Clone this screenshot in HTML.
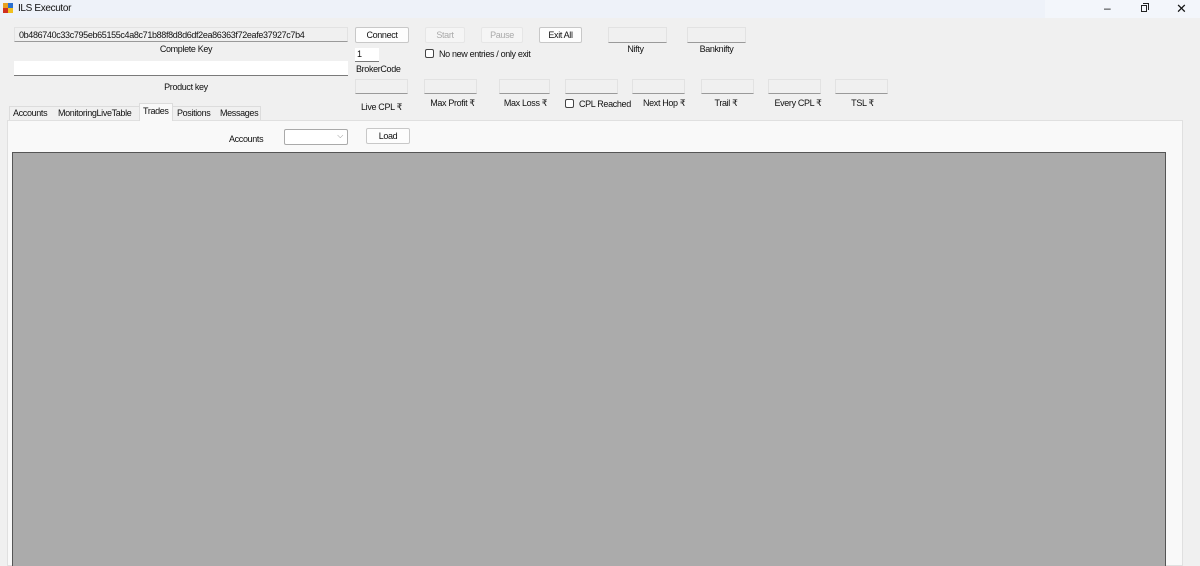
<!DOCTYPE html>
<html><head><style>
*{margin:0;padding:0;box-sizing:border-box}
body{width:1200px;height:566px;overflow:hidden;background:#f0f0f0;font-family:"Liberation Sans",sans-serif;font-size:9px;letter-spacing:-0.35px;color:#111;position:relative}
.a{position:absolute}
.tb{background:#fff;border-bottom:1px solid #7a7a7a}
.box{background:#f0f0f0;border-bottom:1px solid #9a9a9a;border-top:1px solid #e2e2e2;border-left:1px solid #e2e2e2;border-right:1px solid #e2e2e2}
.btn{background:#fdfdfd;border:1px solid #c8c8c8;border-radius:2px;text-align:center;line-height:14px}
.dis{color:#aaa;background:#f5f5f5;border-color:#e6e6e6}
.lbl{text-align:center}
.cb{width:9px;height:9px;border:1px solid #444;border-radius:2px;background:#fff}
</style></head><body>
<div class="a" style="left:0;top:0;width:1200px;height:18px;background:#eef2f9"></div>
<div class="a" style="left:1045px;top:0;width:155px;height:18px;background:#f3f6fb"></div>
<div class="a" style="left:3px;top:3px;width:5px;height:5px;background:#e8a020"></div>
<div class="a" style="left:8px;top:3px;width:5px;height:5px;background:#2a6fd0"></div>
<div class="a" style="left:3px;top:8px;width:5px;height:5px;background:#d03020"></div>
<div class="a" style="left:8px;top:8px;width:5px;height:5px;background:#f0c020"></div>
<div class="a" style="left:18px;top:3px;font-size:10px">ILS Executor</div>
<div class="a" style="left:1104px;top:1px;font-size:12px">–</div>
<div class="a" style="left:1141px;top:5px;width:6px;height:7px;border:1px solid #222"></div>
<div class="a" style="left:1143px;top:3px;width:6px;height:7px;border-top:1px solid #222;border-right:1px solid #222"></div>
<div class="a" style="left:1176px;top:1px;font-size:13px">✕</div>

<div class="a box" style="left:14px;top:27px;width:334px;height:15px;padding:2px 4px">0b486740c33c795eb65155c4a8c71b88f8d8d6df2ea86363f72eafe37927c7b4</div>
<div class="a lbl" style="left:14px;top:44px;width:344px">Complete Key</div>
<div class="a tb" style="left:14px;top:61px;width:334px;height:15px"></div>
<div class="a lbl" style="left:14px;top:82px;width:344px">Product key</div>

<div class="a btn" style="left:355px;top:27px;width:54px;height:16px">Connect</div>
<div class="a tb" style="left:355px;top:48px;width:24px;height:14px;padding:1px 2px">1</div>
<div class="a" style="left:356px;top:64px">BrokerCode</div>
<div class="a btn dis" style="left:425px;top:27px;width:40px;height:16px">Start</div>
<div class="a btn dis" style="left:481px;top:27px;width:42px;height:16px">Pause</div>
<div class="a btn" style="left:539px;top:27px;width:43px;height:16px">Exit All</div>
<div class="a cb" style="left:425px;top:49px"></div>
<div class="a" style="left:439px;top:49px">No new entries / only exit</div>

<div class="a box" style="left:608px;top:27px;width:59px;height:16px"></div>
<div class="a lbl" style="left:608px;top:44px;width:55px">Nifty</div>
<div class="a box" style="left:687px;top:27px;width:59px;height:16px"></div>
<div class="a lbl" style="left:687px;top:44px;width:59px">Banknifty</div>

<div class="a box" style="left:355px;top:79px;width:53px;height:15px"></div>
<div class="a lbl" style="left:355px;top:102px;width:53px">Live CPL ₹</div>
<div class="a box" style="left:424px;top:79px;width:53px;height:15px"></div>
<div class="a lbl" style="left:424px;top:98px;width:57px">Max Profit ₹</div>
<div class="a box" style="left:499px;top:79px;width:51px;height:15px"></div>
<div class="a lbl" style="left:499px;top:98px;width:53px">Max Loss ₹</div>
<div class="a box" style="left:565px;top:79px;width:53px;height:15px"></div>
<div class="a cb" style="left:565px;top:99px"></div>
<div class="a" style="left:579px;top:99px">CPL Reached</div>
<div class="a box" style="left:632px;top:79px;width:53px;height:15px"></div>
<div class="a" style="left:643px;top:98px">Next Hop ₹</div>
<div class="a box" style="left:701px;top:79px;width:53px;height:15px"></div>
<div class="a lbl" style="left:701px;top:98px;width:50px">Trail ₹</div>
<div class="a box" style="left:768px;top:79px;width:53px;height:15px"></div>
<div class="a lbl" style="left:768px;top:98px;width:60px">Every CPL ₹</div>
<div class="a box" style="left:835px;top:79px;width:53px;height:15px"></div>
<div class="a lbl" style="left:835px;top:98px;width:55px">TSL ₹</div>

<div class="a" style="left:7px;top:120px;width:1176px;height:446px;background:#f9f9f9;border:1px solid #e0e0e0"></div>
<div class="a" style="left:9px;top:106px;width:252px;height:14px;background:#f0f0f0;border:1px solid #dcdcdc;border-bottom:none"></div>
<div class="a" style="left:139px;top:103px;width:34px;height:18px;background:#f9f9f9;border:1px solid #dcdcdc;border-bottom:none"></div>
<div class="a" style="left:13px;top:108px">Accounts</div>
<div class="a" style="left:58px;top:108px">MonitoringLiveTable</div>
<div class="a" style="left:143px;top:106px">Trades</div>
<div class="a" style="left:177px;top:108px">Positions</div>
<div class="a" style="left:220px;top:108px">Messages</div>

<div class="a" style="left:229px;top:134px">Accounts</div>
<div class="a" style="left:284px;top:129px;width:64px;height:16px;background:#fff;border:1px solid #aaa;border-radius:2px"><span style="position:absolute;right:4px;top:1px;color:#888;font-size:8px">⌵</span></div>
<div class="a btn" style="left:366px;top:128px;width:44px;height:16px">Load</div>

<div class="a" style="left:12px;top:152px;width:1154px;height:414px;background:#ababab;border:1px solid #555;border-bottom:none"></div>
</body></html>
